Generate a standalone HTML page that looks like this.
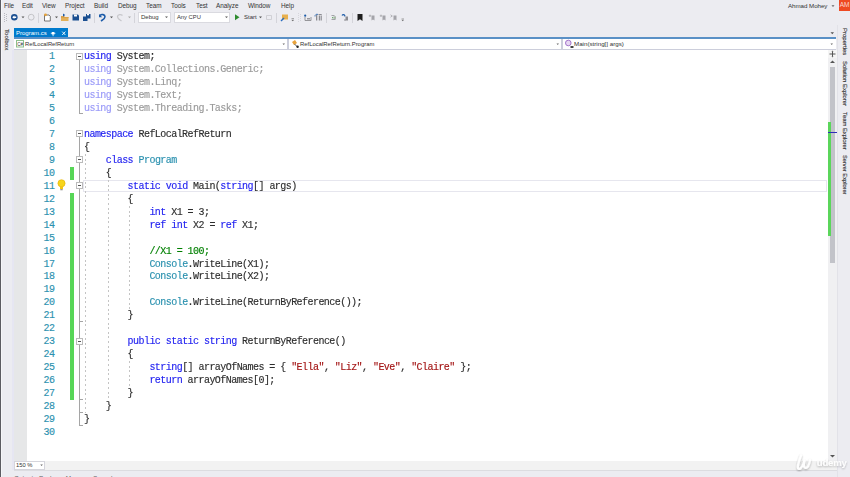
<!DOCTYPE html>
<html><head><meta charset="utf-8">
<style>
*{margin:0;padding:0;box-sizing:border-box}
html,body{width:850px;height:477px;overflow:hidden;background:#ECECF1;position:relative;font-family:"Liberation Sans",sans-serif;color:#1E1E1E}
.a{position:absolute}
.menu span{position:absolute;top:1px;font-size:6.4px;line-height:9px;color:#333;letter-spacing:-0.05px}
.cl{position:absolute;left:84px;font-family:"Liberation Mono",monospace;font-size:10px;letter-spacing:-0.55px;line-height:13px;height:13px;white-space:pre;color:#2E2E2E;-webkit-text-stroke:0.15px;filter:blur(0.2px)}
.num{position:absolute;left:24px;width:30.5px;text-align:right;font-family:"Liberation Mono",monospace;font-size:10px;letter-spacing:-0.55px;line-height:13px;height:13px;color:#2B91AF;-webkit-text-stroke:0.15px}
.k{color:#1F1FF0}.t{color:#2B91AF}.s{color:#A31515}.c{color:#008000}
.dk{color:#9A9AF8}.dg{color:#9A9A9A}
.vt{position:absolute;transform-origin:0 0;transform:rotate(90deg);font-size:5.9px;line-height:7px;white-space:nowrap;color:#2A2A2A;-webkit-text-stroke:0.12px}
.grn{position:absolute;left:70px;width:4px;background:#57D657}
.ob{position:absolute;left:76px;width:7px;height:7px;border:1px solid #BBBBBB;background:#fff}
.ob:after{content:"";position:absolute;left:1px;top:2px;width:3px;height:1px;background:#555}
.gd{position:absolute;width:1px;background:repeating-linear-gradient(to bottom,#C4C4C4 0,#C4C4C4 2px,transparent 2px,transparent 4.6px)}
</style></head><body>
<!-- left dark border -->
<div class="a" style="left:0;top:0;width:1px;height:477px;background:#5C5C62"></div><div class="a" style="left:1px;top:0;width:1px;height:477px;background:#F6F6F9"></div><div class="a" style="left:12px;top:50px;width:1.5px;height:420px;background:#E6E6F2"></div>

<!-- menu -->
<div class="menu">
<span style="left:4px">File</span><span style="left:22px">Edit</span><span style="left:42px">View</span><span style="left:65px">Project</span><span style="left:94px">Build</span><span style="left:118px">Debug</span><span style="left:146px">Team</span><span style="left:171px">Tools</span><span style="left:196px">Test</span><span style="left:216px">Analyze</span><span style="left:248px">Window</span><span style="left:281px">Help</span>
<span style="left:788px;font-size:6.2px">Ahmad Mohey</span>
</div>
<div class="a" style="left:839px;top:0;width:11px;height:10.5px;background:#EE4A22;color:#FBD8CF;font-size:6.5px;line-height:10px;text-align:center;overflow:hidden;white-space:nowrap">AM</div>

<!-- toolbar -->
<svg class="a" style="left:0;top:10px" width="420" height="16" viewBox="0 10 420 16">
<g fill="#B9B9C0"><rect x="4" y="13" width="1" height="1"/><rect x="6" y="14" width="1" height="1"/><rect x="4" y="15" width="1" height="1"/><rect x="6" y="16" width="1" height="1"/><rect x="4" y="17" width="1" height="1"/><rect x="6" y="18" width="1" height="1"/><rect x="4" y="19" width="1" height="1"/><rect x="6" y="20" width="1" height="1"/><rect x="4" y="21" width="1" height="1"/></g>
<circle cx="14.3" cy="17.2" r="3.3" fill="#1B4F91"/><path d="M12.2 17.2l2.2-1.8v1.1h1.8v1.4h-1.8v1.1z" fill="#fff"/>
<path d="M21.5 16.6h3l-1.5 1.6z" fill="#555"/>
<circle cx="31.2" cy="17.2" r="2.9" fill="none" stroke="#C4C4C8" stroke-width="1"/>
<rect x="38" y="13" width="1" height="10" fill="#D4D4DA"/>
<path d="M44.5 15h4.5l1.3 1.3v4.7h-5.8z" fill="#fff" stroke="#555" stroke-width=".8"/><circle cx="45.5" cy="14.8" r="1.4" fill="#E8A33C"/>
<path d="M55 16.6h3l-1.5 1.6z" fill="#555"/>
<path d="M61 17h7.5v4h-7.5z" fill="#E3B15A"/><path d="M61 16h3l1 1h3.5v1h-7.5z" fill="#DBA24A"/><path d="M63 13.5l2.2 1.6-2.2 1.6z" fill="#1C5BA8"/>
<path d="M72.5 14.5h5.5l1 1v5h-6.5z" fill="#1B4F91"/><rect x="74" y="14.5" width="3" height="2" fill="#fff"/>
<path d="M83 16.5h4.5v4.5h-4.5z" fill="#1B4F91"/><path d="M86 14h4.5v4.5h-4.5z" fill="#1B4F91"/><rect x="87" y="14" width="2" height="1.3" fill="#fff"/>
<rect x="94" y="13" width="1" height="10" fill="#D4D4DA"/>
<path d="M100 15.5c1.5-1.5 5-1.2 5 1.3 0 2-2.5 3.2-4 4.2" fill="none" stroke="#1C5BA8" stroke-width="1.6"/><path d="M99 14v3.2h3.2z" fill="#1C5BA8"/>
<path d="M110 16.6h3l-1.5 1.6z" fill="#555"/>
<path d="M122.5 15.5c-1.5-1.5-5-1.2-5 1.3 0 2 2.5 3.2 4 4.2" fill="none" stroke="#C8C8CC" stroke-width="1.3"/>
<path d="M128 16.6h3l-1.5 1.6z" fill="#AAA"/>
<rect x="134" y="13" width="1" height="10" fill="#D4D4DA"/>
<path d="M235 14.3v6l4.5-3z" fill="#2E8B2E"/>
<path d="M259 16.6h3l-1.5 1.6z" fill="#555"/>
<path d="M266.5 15.5h5v4h-5z" fill="none" stroke="#C9C9CE" stroke-width=".8"/>
<rect x="276" y="13" width="1" height="10" fill="#D4D4DA"/>
<path d="M282 14.5h6v5h-6z" fill="#E8B04E"/><path d="M281 21l3-3" stroke="#2A6DC0" stroke-width="1.4"/>
<path d="M291.5 20h2.5l-1.25 1.3z" fill="#666"/><rect x="291.5" y="18.5" width="2.5" height=".7" fill="#666"/>
<g fill="#D6D6DC"><rect x="298" y="13" width="1" height="1"/><rect x="300" y="14" width="1" height="1"/><rect x="298" y="15" width="1" height="1"/><rect x="300" y="16" width="1" height="1"/><rect x="298" y="17" width="1" height="1"/><rect x="300" y="18" width="1" height="1"/><rect x="298" y="19" width="1" height="1"/><rect x="300" y="20" width="1" height="1"/><rect x="298" y="21" width="1" height="1"/></g>
<circle cx="305.2" cy="15.7" r="1.1" fill="#1C5BA8"/><path d="M305 17v3.5h6v-3.5" fill="none" stroke="#8C8C90" stroke-width=".9"/><rect x="307" y="18" width="3" height="1.5" fill="#9A9AA0"/>
<path d="M315 16.5a2 2 0 0 1 3-2" fill="none" stroke="#1C5BA8" stroke-width=".8"/><rect x="316" y="15" width="1.3" height="5.5" fill="#8C8C92"/><rect x="318.5" y="14" width="3.2" height="1" fill="#8C8C92"/><rect x="318.8" y="15.5" width="1.2" height="5" fill="#8C8C92"/><rect x="320.6" y="15.5" width="1.2" height="5" fill="#8C8C92"/>
<rect x="326" y="13" width="1" height="10" fill="#D4D4DA"/>
<rect x="331.5" y="15" width="3" height=".9" fill="#9A9AA0"/><rect x="333.5" y="16.3" width="2.5" height="2.6" fill="#A8B8A8"/><rect x="331.5" y="19" width="4" height=".9" fill="#9A9AA0"/><rect x="332" y="17" width="1.2" height="1.3" fill="#6BAA6B"/>
<path d="M342 15.5a1.6 1.6 0 0 1 2.8 0v1" fill="none" stroke="#1C5BA8" stroke-width="1.1"/><rect x="345.5" y="16.5" width="2.5" height="4" fill="#8C8C92"/><rect x="344" y="19.5" width="2" height="1" fill="#8C8C92"/>
<rect x="352" y="13" width="1" height="10" fill="#D4D4DA"/>
<path d="M357.5 14h5v7l-2.5-1.8-2.5 1.8z" fill="#1E1E1E"/>
<g fill="#A4A4AA"><path d="M371.5 15.5h3v5l-1.5-1-1.5 1z"/><path d="M382.5 15.5h3v5l-1.5-1-1.5 1z"/><path d="M393.5 15.5h3v5l-1.5-1-1.5 1z"/></g>
<g stroke="#A4A4AA" stroke-width=".8" fill="none"><path d="M368.8 15.8h2.4M370 14.6v2.4"/><path d="M379.8 15.8h2.4M381 14.6v2.4"/><path d="M390.5 14.8l1.8 1.2-1.8 1.2"/></g>
<path d="M401.5 19.8h2.5l-1.25 1.4z" fill="#666"/><rect x="401.5" y="18.6" width="2.5" height=".6" fill="#888"/>
</svg>
<div class="a" style="left:138px;top:12px;width:33px;height:11px;background:#fff;border:1px solid #DADAE0;font-size:6px;line-height:9px;padding-left:2px;color:#333">Debug</div>
<svg class="a" style="left:165px;top:16px" width="4" height="3"><path d="M0 0.5h3l-1.5 1.6z" fill="#555"/></svg>
<div class="a" style="left:174px;top:12px;width:56px;height:11px;background:#fff;border:1px solid #DADAE0;font-size:5.8px;line-height:9px;padding-left:2px;color:#333">Any CPU</div>
<svg class="a" style="left:225px;top:16px" width="4" height="3"><path d="M0 0.5h3l-1.5 1.6z" fill="#555"/></svg>
<div class="a" style="left:244px;top:12.5px;font-size:6px;line-height:9px;color:#333">Start</div>

<!-- toolbox label -->
<div class="vt" style="left:10.5px;top:28.5px;font-size:6.2px;color:#444">Toolbox</div>

<!-- tab -->
<div class="a" style="left:14px;top:28px;width:54px;height:10px;background:#007ACC;color:#fff;font-size:6px;line-height:10px;padding-left:2px">Program.cs</div>
<svg class="a" style="left:49px;top:29px" width="19" height="9" viewBox="0 0 19 9"><path d="M2.8 3h2.6v2.6h-2.6z" fill="#fff"/><path d="M1.8 4.3h4.6M4.1 5.6v1.6" stroke="#fff" stroke-width=".8"/><path d="M13.2 2.6l3.2 3.4M16.4 2.6l-3.2 3.4" stroke="#fff" stroke-width=".9"/></svg>
<div class="a" style="left:14px;top:37px;width:822px;height:1.6px;background:#5A90C6"></div>

<!-- nav bar -->
<div class="a" style="left:14px;top:39px;width:822px;height:11px;background:#fff;border-bottom:1px solid #CCCEDB"></div>
<div class="a" style="left:287px;top:39px;width:2px;height:10px;background:#CCCEDB"></div>
<div class="a" style="left:561px;top:39px;width:2px;height:10px;background:#CCCEDB"></div>
<div class="a" style="left:25px;top:40px;font-size:5.8px;line-height:8px;color:#333">RefLocalRefReturn</div>
<div class="a" style="left:300px;top:40px;font-size:5.9px;line-height:8px;color:#333">RefLocalRefReturn.Program</div>
<div class="a" style="left:574px;top:40px;font-size:6.2px;line-height:8px;color:#333">Main(string[] args)</div>

<svg class="a" style="left:15px;top:39px" width="10" height="10" viewBox="0 0 10 10"><rect x="1.5" y="1.5" width="7" height="6.5" fill="#fff" stroke="#8DBF8D" stroke-width="1"/><text x="2.2" y="6.6" font-size="4.5" font-family="Liberation Sans" fill="#333">C#</text></svg>
<svg class="a" style="left:290px;top:39px" width="10" height="10" viewBox="0 0 10 10"><path d="M2 3l3-2 2 3-3 2z" fill="#E8A33C"/><path d="M4.5 5l3 3" stroke="#555" stroke-width="1"/><circle cx="7.6" cy="7.8" r="1.2" fill="#222"/></svg>
<svg class="a" style="left:564px;top:39px" width="10" height="10" viewBox="0 0 10 10"><circle cx="4.3" cy="4" r="2.8" fill="#E7D7F2" stroke="#9B69C6" stroke-width=".9"/><path d="M6.5 7h3v2h-3z" fill="#444"/></svg>
<svg class="a" style="left:282px;top:43px" width="4" height="3"><path d="M0.5 0.5h2.5l-1.25 1.5z" fill="#666"/></svg>
<svg class="a" style="left:556px;top:43px" width="4" height="3"><path d="M0.5 0.5h2.5l-1.25 1.5z" fill="#666"/></svg>
<svg class="a" style="left:830px;top:43px" width="4" height="3"><path d="M0.5 0.5h2.5l-1.25 1.5z" fill="#666"/></svg>
<svg class="a" style="left:830px;top:32px" width="5" height="3"><path d="M0.5 0.3h3.5l-1.75 2z" fill="#555"/></svg>
<svg class="a" style="left:831px;top:5px" width="5" height="3"><path d="M0.5 0.3h3l-1.5 1.8z" fill="#666"/></svg>
<!-- editor -->
<div class="a" style="left:14px;top:50px;width:814px;height:411px;background:#fff"></div>
<div class="a" style="left:14px;top:50px;width:13px;height:411px;background:#E6E7E8"></div>

<!-- scrollbar -->
<div class="a" style="left:828px;top:50px;width:9px;height:411px;background:#F0F0F2"></div>
<div class="a" style="left:830px;top:67px;width:5px;height:196px;background:#C2C3C9"></div>

<div class="a" style="left:828px;top:50px;width:9px;height:8px;background:#F5F5F5"></div>
<svg class="a" style="left:828px;top:50px" width="9" height="8" viewBox="0 0 9 8"><path d="M4.5 1.5v5M1.5 4h6" stroke="#555" stroke-width="1"/><path d="M3.5 1.8h2l-1-1.3zM3.5 6.2h2l-1 1.3z" fill="#555"/></svg>
<svg class="a" style="left:829px;top:60px" width="7" height="4"><path d="M1 3h5l-2.5-2.5z" fill="#555"/></svg>
<svg class="a" style="left:829px;top:454px" width="7" height="4"><path d="M1 1h5l-2.5 2.5z" fill="#555"/></svg>
<div class="a" style="left:828px;top:122px;width:3px;height:114px;background:#5BD65B"></div>
<div class="a" style="left:828px;top:132px;width:9px;height:1px;background:#2E2EB8"></div>
<div class="a" style="left:837px;top:25px;width:1px;height:452px;background:#E2E2E8"></div>
<!-- horizontal bar -->
<div class="a" style="left:14px;top:461px;width:823px;height:10px;background:#F2F2F2;border-bottom:1px solid #DCDCE0"></div>
<div class="a" style="left:14px;top:461px;width:31px;height:9px;background:#fff;border:1px solid #D5D5DC;font-size:5.8px;line-height:7px;padding-left:1px;color:#333">150 %</div>
<svg class="a" style="left:40px;top:464px" width="4" height="3"><path d="M0.3 0.5h2.6l-1.3 1.5z" fill="#666"/></svg>
<div class="a" style="left:0;top:472px;width:850px;height:5px;overflow:hidden">
<span class="a" style="left:14px;top:2.5px;font-size:6.4px;line-height:7px;color:#666">Output</span>
<span class="a" style="left:39px;top:2.5px;font-size:6.4px;line-height:7px;color:#666">Package Manager Console</span>
</div>
<svg class="a" style="left:794px;top:451px" width="56" height="22" viewBox="0 0 56 22"><defs><filter id="sh" x="-20%" y="-20%" width="140%" height="140%"><feGaussianBlur in="SourceAlpha" stdDeviation=".8"/><feOffset dx=".3" dy=".5"/><feComponentTransfer><feFuncA type="linear" slope=".35"/></feComponentTransfer><feMerge><feMergeNode/><feMergeNode in="SourceGraphic"/></feMerge></filter></defs>
<g filter="url(#sh)" fill="none" stroke="#fff" stroke-linecap="round" stroke-width="2.2" opacity=".92">
<path d="M7 4.5c-1.5 4-3 8-3.2 11.5 0 1.8 1.2 2.5 2.6 1.5 1.6-1.4 3-4.5 4-7.5"/>
<path d="M10.4 10c-.6 2.5-1 5 .2 6.5 1 1 2.6.3 3.6-1.5 1-1.8 1.6-4 1.8-6"/>
</g>
<text x="22.8" y="15.2" font-family="Liberation Sans" font-weight="bold" font-size="9.6" fill="#fff" opacity=".85" filter="url(#sh)" letter-spacing="-.2">udemy</text>
</svg>

<!-- right labels -->
<div class="vt" style="left:848px;top:27.5px;font-size:6px">Properties</div>
<div class="vt" style="left:848px;top:60.5px;font-size:5.93px">Solution Explorer</div>
<div class="vt" style="left:848px;top:112px;font-size:5.85px">Team Explorer</div>
<div class="vt" style="left:848px;top:155px;font-size:5.7px">Server Explorer</div>


<div class="a" style="left:83px;top:179.70px;width:744px;height:12px;border:1px solid #E6E6EE"></div>
<div class="grn" style="top:166.73px;height:12.97px"></div>
<div class="grn" style="top:192.67px;height:207.52px"></div>
<div class="a" style="left:79px;top:59.00px;width:1px;height:55.38px;background:#A5A5A5"></div>
<div class="a" style="left:79px;top:113.38px;width:4px;height:1px;background:#A5A5A5"></div>
<div class="a" style="left:79px;top:136.82px;width:1px;height:288.84px;background:#A5A5A5"></div>
<div class="a" style="left:79px;top:320.90px;width:4px;height:1px;background:#A5A5A5"></div>
<div class="a" style="left:79px;top:398.72px;width:4px;height:1px;background:#A5A5A5"></div>
<div class="a" style="left:79px;top:411.69px;width:4px;height:1px;background:#A5A5A5"></div>
<div class="a" style="left:79px;top:424.66px;width:4px;height:1px;background:#A5A5A5"></div>
<div class="ob" style="top:52.50px"></div>
<div class="ob" style="top:130.32px"></div>
<div class="ob" style="top:156.26px"></div>
<div class="ob" style="top:182.20px"></div>
<div class="ob" style="top:337.84px"></div>
<div class="gd" style="left:85px;top:153.76px;height:259.40px"></div>
<div class="gd" style="left:108px;top:179.70px;height:220.49px"></div>
<div class="gd" style="left:129px;top:205.64px;height:103.76px"></div>
<div class="gd" style="left:129px;top:361.28px;height:25.94px"></div>
<svg class="a" style="left:56px;top:178.70px" width="11" height="12" viewBox="0 0 11 12"><circle cx="5.5" cy="4.3" r="3.6" fill="#F7D51D" stroke="#E2B000" stroke-width=".6"/><rect x="4" y="7.5" width="3" height="2.5" fill="#F3C614"/><rect x="4.3" y="10" width="2.4" height="1.3" fill="#999"/></svg>
<div class="num" style="top:50.00px">1</div>
<div class="num" style="top:62.97px">2</div>
<div class="num" style="top:75.94px">3</div>
<div class="num" style="top:88.91px">4</div>
<div class="num" style="top:101.88px">5</div>
<div class="num" style="top:114.85px">6</div>
<div class="num" style="top:127.82px">7</div>
<div class="num" style="top:140.79px">8</div>
<div class="num" style="top:153.76px">9</div>
<div class="num" style="top:166.73px">10</div>
<div class="num" style="top:179.70px">11</div>
<div class="num" style="top:192.67px">12</div>
<div class="num" style="top:205.64px">13</div>
<div class="num" style="top:218.61px">14</div>
<div class="num" style="top:231.58px">15</div>
<div class="num" style="top:244.55px">16</div>
<div class="num" style="top:257.52px">17</div>
<div class="num" style="top:270.49px">18</div>
<div class="num" style="top:283.46px">19</div>
<div class="num" style="top:296.43px">20</div>
<div class="num" style="top:309.40px">21</div>
<div class="num" style="top:322.37px">22</div>
<div class="num" style="top:335.34px">23</div>
<div class="num" style="top:348.31px">24</div>
<div class="num" style="top:361.28px">25</div>
<div class="num" style="top:374.25px">26</div>
<div class="num" style="top:387.22px">27</div>
<div class="num" style="top:400.19px">28</div>
<div class="num" style="top:413.16px">29</div>
<div class="num" style="top:426.13px">30</div>
<div class="cl" style="top:50.00px"><span class="k">using</span> System;</div>
<div class="cl" style="top:62.97px"><span class="dk">using</span><span class="dg"> System.Collections.Generic;</span></div>
<div class="cl" style="top:75.94px"><span class="dk">using</span><span class="dg"> System.Linq;</span></div>
<div class="cl" style="top:88.91px"><span class="dk">using</span><span class="dg"> System.Text;</span></div>
<div class="cl" style="top:101.88px"><span class="dk">using</span><span class="dg"> System.Threading.Tasks;</span></div>
<div class="cl" style="top:127.82px"><span class="k">namespace</span> RefLocalRefReturn</div>
<div class="cl" style="top:140.79px">{</div>
<div class="cl" style="top:153.76px">    <span class="k">class</span> <span class="t">Program</span></div>
<div class="cl" style="top:166.73px">    {</div>
<div class="cl" style="top:179.70px">        <span class="k">static</span> <span class="k">void</span> Main(<span class="k">string</span>[] args)</div>
<div class="cl" style="top:192.67px">        {</div>
<div class="cl" style="top:205.64px">            <span class="k">int</span> X1 = 3;</div>
<div class="cl" style="top:218.61px">            <span class="k">ref</span> <span class="k">int</span> X2 = <span class="k">ref</span> X1;</div>
<div class="cl" style="top:244.55px">            <span class="c">//X1 = 100;</span></div>
<div class="cl" style="top:257.52px">            <span class="t">Console</span>.WriteLine(X1);</div>
<div class="cl" style="top:270.49px">            <span class="t">Console</span>.WriteLine(X2);</div>
<div class="cl" style="top:296.43px">            <span class="t">Console</span>.WriteLine(ReturnByReference());</div>
<div class="cl" style="top:309.40px">        }</div>
<div class="cl" style="top:335.34px">        <span class="k">public</span> <span class="k">static</span> <span class="k">string</span> ReturnByReference()</div>
<div class="cl" style="top:348.31px">        {</div>
<div class="cl" style="top:361.28px">            <span class="k">string</span>[] arrayOfNames = { <span class="s">"Ella"</span>, <span class="s">"Liz"</span>, <span class="s">"Eve"</span>, <span class="s">"Claire"</span> };</div>
<div class="cl" style="top:374.25px">            <span class="k">return</span> arrayOfNames[0];</div>
<div class="cl" style="top:387.22px">        }</div>
<div class="cl" style="top:400.19px">    }</div>
<div class="cl" style="top:413.16px">}</div>
</body></html>
